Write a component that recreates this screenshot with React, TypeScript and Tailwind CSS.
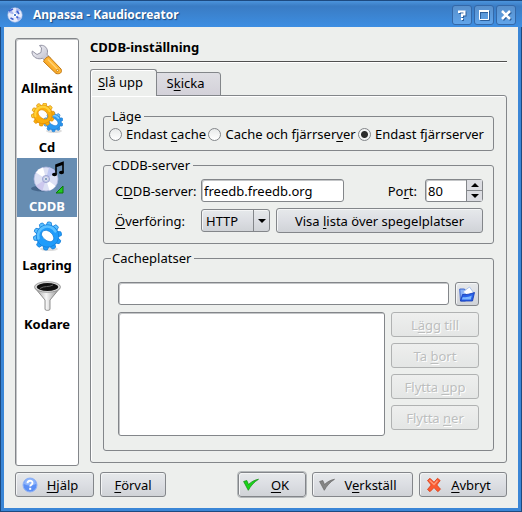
import { useState } from "react";
import type { ReactNode } from "react";

const BUTTON =
  "flex items-center justify-center rounded-[3px] border border-[#83868a] bg-linear-to-b from-[#e6e9eb] via-[#dcdee3] to-[#d0d3d7] shadow-[inset_1px_1px_0_#f4f5f6]";
const FIELD = "rounded-[3px] border border-[#83868a] bg-white shadow-[inset_1px_1px_0_#c4c6c8]";

function Key({ children }: { children: ReactNode }) {
  return <span className="underline decoration-1 underline-offset-2">{children}</span>;
}

function WrenchIcon() {
  return (
    <svg width="32" height="32" viewBox="0 0 32 32" aria-hidden="true">
      <defs>
        <linearGradient id="steel" x1="0" y1="0" x2="1" y2="1">
          <stop offset="0" stopColor="#f8f8fc" />
          <stop offset="1" stopColor="#b5b5c4" />
        </linearGradient>
        <linearGradient id="handle" x1="0" y1="1" x2="1" y2="0">
          <stop offset="0" stopColor="#f08a00" />
          <stop offset=".55" stopColor="#ffb93a" />
          <stop offset="1" stopColor="#f59a10" />
        </linearGradient>
      </defs>
      <path
        d="M8.500 1.500c4-1 7.500 1.500 8 5.500.1 1.200-.1 2.200-.5 3.200l3.500 4-4 4-4-4C7 16 2 13.500 1 9l.3-2L6 10.500l4-2L10.500 4z"
        fill="url(#steel)"
        stroke="#9494a4"
        strokeWidth="1"
      />
      <path d="M12.500 17.500c1-2.500 3-4.500 5.500-5l12 12.500c1.500 3.500-1 5.500-5 4.500z" fill="url(#handle)" stroke="#c27812" strokeWidth="1" />
      <path d="M17.500 16l9 9.300" stroke="#ffd47c" strokeWidth="1.200" strokeLinecap="round" />
      <circle cx="26.500" cy="26.500" r="1.100" fill="#fff3c8" stroke="#b86a00" strokeWidth=".7" />
    </svg>
  );
}

const TEETH = [0, 36, 72, 108, 144, 180, 216, 252, 288, 324];

function Gear({ light, dark, edge }: { light: string; dark: string; edge: string }) {
  return (
    <g>
      {TEETH.map((a) => (
        <path
          key={a}
          d="M-1.800-13.500q1.800-.8 3.600 0l1.200 4.500h-6z"
          transform={`rotate(${a})`}
          fill={a > 60 && a < 240 ? dark : light}
          stroke={edge}
          strokeWidth=".8"
        />
      ))}
      <path
        fillRule="evenodd"
        d="M-11 0a11 11 0 1 0 22 0a11 11 0 1 0-22 0zM-5.500-3.500C-3-7 3-5 5.500-1S5 6 1 5-8 0-5.500-3.500z"
        fill={dark}
        stroke={edge}
        strokeWidth=".8"
      />
      <path d="M-8.500 3.500A9 9 0 0 1 7-5.500" fill="none" stroke={light} strokeWidth="2.600" strokeLinecap="round" />
    </g>
  );
}

function GearsIcon() {
  return (
    <svg width="32" height="32" viewBox="0 0 32 32" aria-hidden="true">
      <ellipse cx="23" cy="28" rx="8" ry="2" fill="#0002" />
      <g transform="translate(22.500 19) scale(.7)">
        <Gear light="#74c8ff" dark="#2c9af2" edge="#1f78cc" />
      </g>
      <g transform="translate(12 11.500) rotate(10) scale(.84)">
        <Gear light="#ffd23a" dark="#fcae0c" edge="#dc8c05" />
      </g>
    </svg>
  );
}

function BlueGearIcon() {
  return (
    <svg width="32" height="32" viewBox="0 0 32 32" aria-hidden="true">
      <ellipse cx="18" cy="28" rx="9" ry="2" fill="#0002" />
      <g transform="translate(16.500 15) rotate(8) scale(1.020)">
        <Gear light="#5cc0ff" dark="#1f9cfb" edge="#1680da" />
      </g>
    </svg>
  );
}

function Disc() {
  return (
    <g>
      <circle cx="13" cy="16" r="12" fill="#dce0f4" stroke="#a9b2da" strokeWidth=".8" />
      <path d="M13 16L3 9.500A12 12 0 0 1 10 4.500z" fill="#fff" />
      <path d="M13 16l9.500 7a12 12 0 0 1-6 4.500z" fill="#fff" />
      <path d="M13 16L16 4.500a12 12 0 0 1 7 5z" fill="#bcc6f2" />
      <path d="M13 16L9.500 27.500A12 12 0 0 1 3 22.500z" fill="#cdc8ee" />
      <circle cx="13" cy="16" r="3.600" fill="#c6cae8" stroke="#8d96c8" strokeWidth=".7" />
      <circle cx="13" cy="16" r="1.500" fill="#6488b0" stroke="#fff" strokeWidth=".7" />
    </g>
  );
}

function CddbIcon() {
  return (
    <svg width="32" height="32" viewBox="0 0 32 32" aria-hidden="true" className="overflow-visible">
      <ellipse cx="11" cy="26.500" rx="11" ry="3" fill="#2f4d72" opacity=".6" />
      <g transform="translate(2 1)">
        <Disc />
      </g>
      <path d="M25 12V3l7-2.500V10M25 4.500l7-2.500" stroke="#000" strokeWidth="1.600" fill="none" />
      <ellipse cx="23.500" cy="12.500" rx="2.500" ry="1.800" fill="#000" />
      <ellipse cx="30.500" cy="10.500" rx="2.500" ry="1.800" fill="#000" />
      <path d="M32 24v7h-7z" fill="#22c822" stroke="#0a780a" strokeWidth="1" />
    </svg>
  );
}

function FunnelIcon() {
  return (
    <svg width="32" height="32" viewBox="0 0 32 32" aria-hidden="true">
      <defs>
        <linearGradient id="metal" x1="0" x2="1">
          <stop offset="0" stopColor="#9a9a9a" />
          <stop offset=".45" stopColor="#f6f6f6" />
          <stop offset="1" stopColor="#888" />
        </linearGradient>
      </defs>
      <path d="M4 8l10 12v9.500c1.200 1.200 3.800 1.200 5 0V20L29 8z" fill="url(#metal)" stroke="#777" strokeWidth=".8" />
      <ellipse cx="16.500" cy="7" rx="13" ry="5.300" fill="#ddd" stroke="#8a8a8a" strokeWidth=".8" />
      <ellipse cx="16.500" cy="7" rx="10.800" ry="4" fill="#111" />
      <path d="M9 8.500c4-3 9-1 13-3.500" stroke="#666" strokeWidth="1" fill="none" />
    </svg>
  );
}

function TitleDisc() {
  return (
    <svg width="16" height="16" viewBox="0 0 16 16" aria-hidden="true">
      <circle cx="8" cy="8" r="7.200" fill="#e8ecfb" stroke="#b9c6ee" strokeWidth=".6" />
      <path d="M8 8L1 5.500 3.500 2z M8 8l1.500-7 4 2z M8 8l6.500 3-3.500 3z" fill="#a9b8ee" />
      <path d="M2 4l4-2M10 4l2 3M3.500 11l3 1.500M9 9l2 2" stroke="#4060d0" strokeWidth="1.600" />
      <circle cx="8" cy="8" r="1.700" fill="#4b7fd0" stroke="#fff" />
    </svg>
  );
}

function HelpIcon() {
  return (
    <svg width="16" height="16" viewBox="0 0 16 16" aria-hidden="true">
      <circle cx="8" cy="8" r="7" fill="#5b8ff5" stroke="#8fb2f8" />
      <path d="M2 7a6 6 0 0 1 12 0c-4 2-8 2-12 0z" fill="#8db4fb" />
      <path d="M5.500 6.200c0-3.200 5-3.200 5-.3 0 1.800-2.300 1.800-2.300 3.600" stroke="#fff" strokeWidth="1.900" fill="none" />
      <rect x="7.200" y="10.800" width="2" height="2" fill="#fff" />
    </svg>
  );
}

function CheckIcon({ fill, edge }: { fill: string; edge: string }) {
  return (
    <svg width="16" height="16" viewBox="0 0 16 16" aria-hidden="true">
      <path d="M.6 4.500l3.200-1 1.700 4C8 5 11.500 3 15.500 2.300 11.500 4.800 7.500 9 5.300 13.300z" fill={fill} stroke={edge} strokeWidth=".7" />
    </svg>
  );
}

function CrossIcon() {
  return (
    <svg width="16" height="16" viewBox="0 0 16 16" aria-hidden="true">
      <path
        d="M1.500 3.500L4 1.300l4 4 3.500-4 2.700 2.200L10.800 8l3.700 4.200-2.700 2.500L8 10.600l-4 4.100-2.500-2.200L5.200 8z"
        fill="#fb5a30"
        stroke="#d83a14"
        strokeWidth=".8"
      />
      <path d="M3.500 3.200L8 7.500l3.500-4" stroke="#ff9a78" strokeWidth="1.300" fill="none" />
    </svg>
  );
}

function FolderIcon() {
  return (
    <svg width="16" height="16" viewBox="0 0 16 16" aria-hidden="true">
      <path d="M.7 3h4.800l1 1.500V15H1.500z" fill="#8db4f6" stroke="#2450c8" strokeWidth=".8" />
      <path d="M4 6l6.500-5 4 5.500-3 5z" fill="#fff" stroke="#8fb0e8" strokeWidth=".7" />
      <path d="M3.500 8.500c4 .5 7-.5 12-2L13.500 15h-12z" fill="#2a62e8" stroke="#1238b4" strokeWidth=".8" />
      <path d="M2.800 13.500l1-2.500c3 .5 6 0 9-1.500l-1 4z" fill="#7db8ff" />
    </svg>
  );
}

const PAGES = [
  { name: "Allmänt", icon: <WrenchIcon /> },
  { name: "Cd", icon: <GearsIcon /> },
  { name: "CDDB", icon: <CddbIcon /> },
  { name: "Lagring", icon: <BlueGearIcon /> },
  { name: "Kodare", icon: <FunnelIcon /> },
];

function Sidebar() {
  const [page, setPage] = useState("CDDB");
  return (
    <nav className={`flex w-16 shrink-0 flex-col p-px ${FIELD}`}>
      {PAGES.map((p) => (
        <button
          key={p.name}
          type="button"
          onClick={() => setPage(p.name)}
          className={`flex h-[59px] flex-col items-center gap-[3px] pt-1 text-[13px] leading-[18px] font-bold ${
            p.name === page ? "bg-[#678db2] text-white" : "text-black"
          }`}
        >
          {p.icon}
          {p.name}
        </button>
      ))}
    </nav>
  );
}

function TitleButton({ label, children }: { label: string; children: ReactNode }) {
  return (
    <button
      type="button"
      aria-label={label}
      className="flex size-5 items-center justify-center rounded-[3px] border border-[#3468a8] bg-linear-to-b from-[#5890cc] to-[#60a4ea]"
    >
      <svg width="12" height="12" viewBox="0 0 12 12" fill="none" stroke="#fff" strokeWidth="2" className="drop-shadow-[1px_1px_0_#2c5f9c]">
        {children}
      </svg>
    </button>
  );
}

function TitleBar() {
  return (
    <header className="flex h-[27px] shrink-0 items-center border-t border-[#1d4a80] bg-linear-to-b from-[#4c94dc] via-[#3a7cc4] via-20% to-[#3d8ee2] pt-px pr-[6px] pl-[7px]">
      <TitleDisc />
      <h1 className="ml-[10px] flex-1 text-[12px] leading-5 font-bold text-white [text-shadow:1px_1px_1px_#1d4a80]">
        Anpassa - Kaudiocreator
      </h1>
      <div className="flex gap-[2px]">
        <TitleButton label="Hjälp">
          <path d="M3 4V2.500h5.500v3H6V8M6 9v2" />
        </TitleButton>
        <TitleButton label="Maximera">
          <path d="M1.500 1.500h9v9h-9z" strokeWidth="1" />
          <path d="M1 2h10" strokeWidth="2" />
        </TitleButton>
        <TitleButton label="Stäng">
          <path d="M2 2l8 8M10 2l-8 8" strokeWidth="2.500" />
        </TitleButton>
      </div>
    </header>
  );
}

function Group({ title, className, children }: { title: string; className?: string; children: ReactNode }) {
  return (
    <fieldset className={`min-w-0 rounded-[3px] border border-[#83868a] ${className ?? ""}`}>
      <legend className="ml-[7px] pr-[3px] pl-px leading-4">{title}</legend>
      {children}
    </fieldset>
  );
}

function Radio({ value, checked, onPick, children }: { value: string; checked: boolean; onPick: (v: string) => void; children: ReactNode }) {
  return (
    <label className="flex items-center gap-1 whitespace-nowrap">
      <input
        type="radio"
        name="mode"
        checked={checked}
        onChange={() => onPick(value)}
        className="size-[13px] appearance-none rounded-full border border-[#83868a] bg-linear-to-b from-[#e8eaea] to-white checked:bg-[radial-gradient(circle,#2c2c2c_3px,#f4f5f5_4px)]"
      />
      {children}
    </label>
  );
}

function ModeGroup() {
  const [mode, setMode] = useState("remote");
  return (
    <Group title="Läge">
      <div className="flex h-[26px] items-center justify-between pr-[9px] pb-[6px] pl-[5px]">
        <Radio value="cache" checked={mode === "cache"} onPick={setMode}>
          <span>Endast <Key>c</Key>ache</span>
        </Radio>
        <Radio value="both" checked={mode === "both"} onPick={setMode}>
          <span>Cache och fjärrser<Key>v</Key>er</span>
        </Radio>
        <Radio value="remote" checked={mode === "remote"} onPick={setMode}>
          <span>Endast fjärrserver</span>
        </Radio>
      </div>
    </Group>
  );
}

function ServerGroup() {
  const [port, setPort] = useState(80);
  return (
    <Group title="CDDB-server">
      <div className="flex flex-col gap-[6px] pt-[6px] pr-[10px] pb-[10px] pl-[11px]">
        <div className="flex items-center">
          <label htmlFor="server" className="w-[86px] shrink-0">C<Key>D</Key>DB-server:</label>
          <input id="server" defaultValue="freedb.freedb.org" className={`h-[23px] w-[143px] px-[2px] ${FIELD}`} />
          <label htmlFor="port" className="mr-2 ml-auto">Po<Key>r</Key>t:</label>
          <div className={`flex h-[23px] w-[58px] ${FIELD}`}>
            <input
              id="port"
              value={port}
              onChange={(e) => setPort(Number(e.target.value) || 0)}
              className="w-10 bg-transparent pl-[2px]"
            />
            <div className="flex flex-1 flex-col divide-y divide-[#83868a] border-l border-[#83868a] bg-[#dcdde2]">
              <button type="button" aria-label="Öka" onClick={() => setPort(port + 1)} className="flex flex-1 items-center justify-center">
                <svg width="8" height="4" viewBox="0 0 8 4"><path d="M0 4l4-4 4 4z" /></svg>
              </button>
              <button type="button" aria-label="Minska" onClick={() => setPort(port - 1)} className="flex flex-1 items-center justify-center">
                <svg width="8" height="4" viewBox="0 0 8 4"><path d="M0 0l4 4 4-4z" /></svg>
              </button>
            </div>
          </div>
        </div>
        <div className="flex items-center">
          <label htmlFor="transport" className="w-[86px] shrink-0"><Key>Ö</Key>verföring:</label>
          <div className={`relative mr-[6px] h-[23px] w-[69px] shrink-0 ${BUTTON}`}>
            <select id="transport" className="size-full appearance-none bg-transparent pl-1 leading-5">
              <option>HTTP</option>
              <option>CDDBP</option>
            </select>
            <span className="pointer-events-none absolute inset-y-0 right-0 flex w-4 items-center justify-center border-l border-[#83868a]">
              <svg width="8" height="4" viewBox="0 0 8 4"><path d="M0 0l4 4 4-4z" /></svg>
            </span>
          </div>
          <button type="button" className={`h-[25px] flex-1 ${BUTTON}`}>
            <span>Visa <Key>l</Key>ista över spegelplatser</span>
          </button>
        </div>
      </div>
    </Group>
  );
}

function DisabledButton({ children }: { children: ReactNode }) {
  return (
    <button
      type="button"
      disabled
      className="h-[25px] rounded-[3px] border border-[#b0b2b2] bg-linear-to-b from-[#eeefee] to-[#e4e6e5] text-[#bcbebe] [text-shadow:1px_1px_0_#fff]"
    >
      {children}
    </button>
  );
}

function CacheGroup() {
  return (
    <Group title="Cacheplatser" className="flex flex-1 flex-col">
      <div className="flex h-full flex-col gap-[6px] px-[14px] pt-4 pb-[14px]">
        <div className="flex gap-[6px]">
          <input aria-label="Cacheplats" className={`h-[23px] min-w-0 flex-1 px-[2px] ${FIELD}`} />
          <button type="button" aria-label="Öppna" className={`size-6 ${BUTTON}`}>
            <FolderIcon />
          </button>
        </div>
        <div className="flex flex-1 gap-[6px]">
          <div role="listbox" aria-label="Cacheplatser" className={`flex-1 ${FIELD}`} />
          <div className="flex w-[88px] flex-col gap-[6px]">
            <DisabledButton>L<Key>ä</Key>gg till</DisabledButton>
            <DisabledButton>Ta <Key>b</Key>ort</DisabledButton>
            <DisabledButton>Flytta <Key>u</Key>pp</DisabledButton>
            <DisabledButton>Flytta <Key>n</Key>er</DisabledButton>
          </div>
        </div>
      </div>
    </Group>
  );
}

function DialogButton({ icon, className, children }: { icon?: ReactNode; className: string; children: ReactNode }) {
  return (
    <button type="button" className={`h-[25px] ${BUTTON} ${className}`}>
      {icon}
      <span className="flex-1 text-center">{children}</span>
    </button>
  );
}

export default function App() {
  return (
    <div className="flex min-h-screen flex-col bg-[#3a86d6] font-['Noto_Sans','Open_Sans',sans-serif] text-[13px] leading-[18px] text-black">
      <TitleBar />
      <div className="flex flex-1 border-x border-b border-[#1d4a80]">
        <main className="mx-[3px] mb-[3px] flex flex-1 flex-col bg-[#edefed] px-[11px] pt-[11px] pb-[11px]">
          <div className="flex flex-1 gap-[11px]">
            <Sidebar />
            <section className="flex min-w-0 flex-1 flex-col pb-[3px]">
              <h2 className="h-6 border-b border-[#505050] font-bold shadow-[0_1px_0_#fff]">CDDB-inställning</h2>
              <div role="tablist" className="mt-[7px] flex items-end">
                <button
                  type="button"
                  role="tab"
                  aria-selected="true"
                  className="relative z-10 -mb-px h-[27px] w-[67px] rounded-t-[3px] border border-b-0 border-[#83868a] bg-[#edefed] pr-[6px] pb-[2px] shadow-[inset_1px_1px_0_#fff]"
                >
                  <Key>S</Key>lå upp
                </button>
                <button
                  type="button"
                  role="tab"
                  aria-selected="false"
                  className="-mb-px -ml-px h-6 w-[65px] rounded-tr-[3px] border border-[#83868a] bg-linear-to-b from-[#dedee3] to-[#d3d1d9] pr-[6px] pb-[2px]"
                >
                  S<Key>k</Key>icka
                </button>
              </div>
              <div
                role="tabpanel"
                className="flex flex-1 flex-col gap-[6px] rounded-[3px] rounded-tl-none border border-[#83868a] px-3 pt-3 pb-[11px] shadow-[inset_1px_1px_0_#fff]"
              >
                <ModeGroup />
                <ServerGroup />
                <CacheGroup />
              </div>
            </section>
          </div>
          <footer className="mt-[6px] flex">
            <DialogButton icon={<HelpIcon />} className="mr-[6px] w-[79px] px-[6px]"><Key>H</Key>jälp</DialogButton>
            <DialogButton className="w-[66px]"><Key>F</Key>örval</DialogButton>
            <DialogButton icon={<CheckIcon fill="#19d419" edge="#0b8a0b" />} className="ml-auto w-[68px] px-1 outline outline-[#b4b8ba]">
              <Key>O</Key>K
            </DialogButton>
            <DialogButton icon={<CheckIcon fill="#858585" edge="#666" />} className="mx-[6px] w-[101px] px-[6px]">
              V<Key>e</Key>rkställ
            </DialogButton>
            <DialogButton icon={<CrossIcon />} className="w-[88px] px-[6px]"><Key>A</Key>vbryt</DialogButton>
          </footer>
        </main>
      </div>
    </div>
  );
}
